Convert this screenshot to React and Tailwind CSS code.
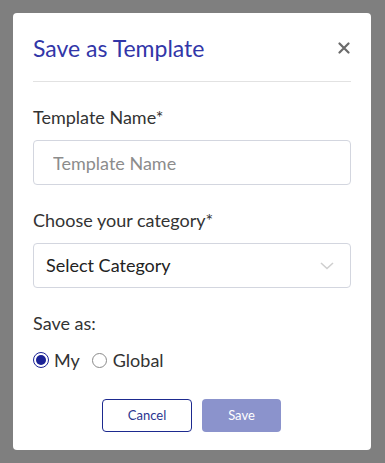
import React from "react";

export default function App() {
  return (
    <div className="w-[385px] h-[463px] bg-[#7f7f7f] pt-[13px] pl-[13px]" style={{ fontFamily: "Lato, 'Noto Sans', sans-serif" }}>
      <div className="w-[358px] h-[437px] bg-white rounded-[4px] px-5 flex flex-col">
        <div className="flex items-center justify-between h-[69px] border-b border-[#e2e2e2] pt-[2px]">
          <h2 className="text-[23px] text-[#3236a8] leading-none">Save as Template</h2>
          <svg width="12" height="12" viewBox="0 0 12 12" className="mr-[1px]">
            <path d="M1.5 1.5 L10.5 10.5 M10.5 1.5 L1.5 10.5" stroke="#6b6b6b" strokeWidth="2.2" strokeLinecap="round" />
          </svg>
        </div>
        <label className="mt-[24px] text-[18px] text-[#333] leading-[22px]">Template Name*</label>
        <input
          placeholder="Template Name"
          className="mt-[12px] h-[45px] w-full border border-[#d3d6df] rounded-[4px] pl-[19px] text-[18px] placeholder:text-[#8c8c8c] outline-none"
        />
        <label className="mt-[24px] text-[18px] text-[#333] leading-[22px]">Choose your category*</label>
        <div className="mt-[12px] h-[45px] w-full border border-[#d3d6df] rounded-[4px] pl-[12px] pr-[16px] flex items-center justify-between">
          <span className="text-[18px] text-[#222]">Select Category</span>
          <svg width="14" height="8" viewBox="0 0 14 8">
            <path d="M1 1 L7 6.5 L13 1" fill="none" stroke="#cfcfcf" strokeWidth="1.6" />
          </svg>
        </div>
        <div className="mt-[24px] text-[18px] text-[#333] leading-[22px]">Save as:</div>
        <div className="mt-[15px] flex items-center text-[18px] text-[#333] leading-[22px]">
          <span className="w-[16px] h-[16px] rounded-full border-[1.5px] border-[#1a2296] flex items-center justify-center">
            <span className="w-[10px] h-[10px] rounded-full bg-[#1a2296]" />
          </span>
          <span className="ml-[5px]">My</span>
          <span className="ml-[12px] w-[15px] h-[15px] rounded-full border-[1.5px] border-[#8a8a8a]" />
          <span className="ml-[6px]">Global</span>
        </div>
        <div className="mt-[28px] flex justify-center gap-[10px] pr-[1px]">
          <button className="w-[90px] h-[33px] border-[1.5px] border-[#1d2a8f] rounded-[4px] text-[13px] text-[#2a3590] bg-white">Cancel</button>
          <button className="w-[79px] h-[33px] rounded-[4px] text-[13px] text-white bg-[#8b93cc]">Save</button>
        </div>
      </div>
    </div>
  );
}
